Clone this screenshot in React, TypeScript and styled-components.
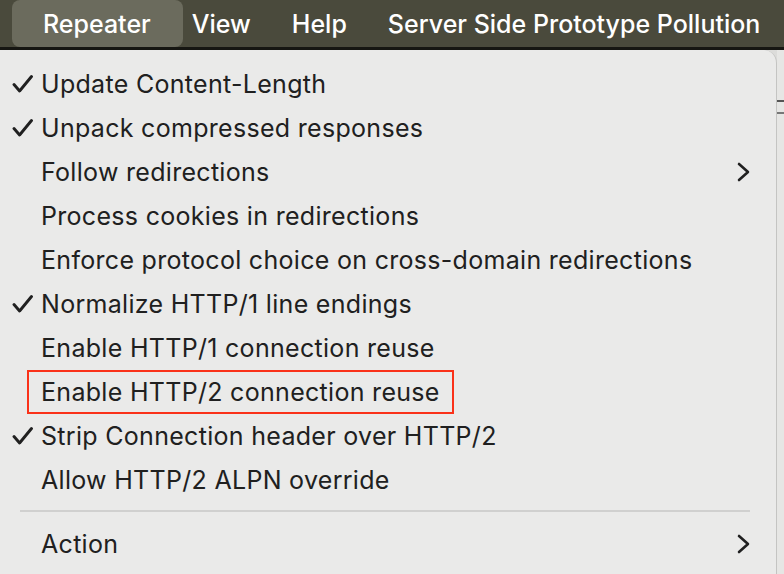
import React from "react";
import styled, { createGlobalStyle } from "styled-components";

const Global = createGlobalStyle`
  html, body { margin: 0; padding: 0; }
  body {
    background: #d9d9d7;
    overflow: hidden;
    font-family: Inter, "Noto Sans", "Liberation Sans", sans-serif;
    -webkit-font-smoothing: antialiased;
  }
`;

const Screen = styled.div`
  width: 784px;
  height: 574px;
  display: flex;
  flex-direction: column;
  overflow: hidden;
  background: #dcdcda;
`;

const MenuBar = styled.div`
  height: 47px;
  flex: none;
  display: flex;
  align-items: stretch;
  padding-left: 12px;
  background: #4a4a3c;
  border-bottom: 3px solid #161612;
`;

const MenuTitle = styled.div<{ $active?: boolean; $l: number; $r: number }>`
  display: flex;
  align-items: center;
  padding: 0 ${(p) => p.$r}px 0 ${(p) => p.$l}px;
  border-radius: 8px;
  background: ${(p) => (p.$active ? "#6b6b5d" : "transparent")};
  color: #ffffff;
  font-size: 25px;
  font-weight: 500;
  white-space: nowrap;
`;

const Body = styled.div`
  flex: 1;
  display: flex;
  min-height: 0;
`;

const Panel = styled.div`
  width: 777px;
  flex: none;
  background: #eaeae9;
  border-top-right-radius: 13px;
  border-right: 1px solid #c4c4c2;
  padding-top: 12px;
  box-sizing: border-box;
  display: flex;
  flex-direction: column;
`;

const Outside = styled.div`
  flex: 1;
  display: flex;
  flex-direction: column;
  gap: 10px;
  padding-top: 50px;
  background: #e6e6e4;
`;

const Mark = styled.div<{ $color: string }>`
  height: 2px;
  background: ${(p) => p.$color};
`;

const Row = styled.div`
  height: 44px;
  flex: none;
  display: flex;
  align-items: center;
  padding: 0 26px 0 12px;
  color: #202020;
  font-size: 25px;
  letter-spacing: 0.3px;
  white-space: nowrap;
`;

const Check = styled.span`
  width: 29px;
  flex: none;
  display: flex;
  align-items: center;
`;

const Label = styled.span`
  flex: 1;
  display: flex;
  align-items: center;
  height: 100%;
`;

const Boxed = styled.span`
  display: inline-flex;
  align-items: center;
  box-sizing: border-box;
  height: 44px;
  margin-left: -14px;
  padding: 0 12px 0 12px;
  border: 2px solid #fa3219;
`;

const Separator = styled.div`
  height: 2px;
  margin: 8px 26px 10px 20px;
  background: #d0d0cf;
  flex: none;
`;

const CheckIcon = () => (
  <svg width="22" height="20" viewBox="0 0 22 20">
    <path
      d="M2 10.5 L7.6 17 L19.5 2.5"
      fill="none"
      stroke="#202020"
      strokeWidth="2.9"
      strokeLinecap="round"
      strokeLinejoin="round"
    />
  </svg>
);

const Chevron = () => (
  <svg width="13" height="20" viewBox="0 0 13 20">
    <path
      d="M2 2 L11 10 L2 18"
      fill="none"
      stroke="#202020"
      strokeWidth="2.6"
      strokeLinecap="round"
      strokeLinejoin="round"
    />
  </svg>
);

type Item = { label: string; checked?: boolean; sub?: boolean; boxed?: boolean };

const items: Item[] = [
  { label: "Update Content-Length", checked: true },
  { label: "Unpack compressed responses", checked: true },
  { label: "Follow redirections", sub: true },
  { label: "Process cookies in redirections" },
  { label: "Enforce protocol choice on cross-domain redirections" },
  { label: "Normalize HTTP/1 line endings", checked: true },
  { label: "Enable HTTP/1 connection reuse" },
  { label: "Enable HTTP/2 connection reuse", boxed: true },
  { label: "Strip Connection header over HTTP/2", checked: true },
  { label: "Allow HTTP/2 ALPN override" },
];

const MenuRow = ({ item }: { item: Item }) => (
  <Row>
    <Check>{item.checked && <CheckIcon />}</Check>
    <Label>{item.boxed ? <Boxed>{item.label}</Boxed> : item.label}</Label>
    {item.sub && <Chevron />}
  </Row>
);

export default function App() {
  return (
    <Screen>
      <Global />
      <MenuBar>
        <MenuTitle $active $l={31} $r={32}>Repeater</MenuTitle>
        <MenuTitle $l={9} $r={20}>View</MenuTitle>
        <MenuTitle $l={21} $r={20}>Help</MenuTitle>
        <MenuTitle $l={21} $r={10}>Server Side Prototype Pollution</MenuTitle>
      </MenuBar>
      <Body>
        <Panel>
          {items.map((it) => (
            <MenuRow key={it.label} item={it} />
          ))}
          <Separator />
          <MenuRow item={{ label: "Action", sub: true }} />
        </Panel>
        <Outside>
          <Mark $color="#555" />
          <Mark $color="#777" />
        </Outside>
      </Body>
    </Screen>
  );
}
